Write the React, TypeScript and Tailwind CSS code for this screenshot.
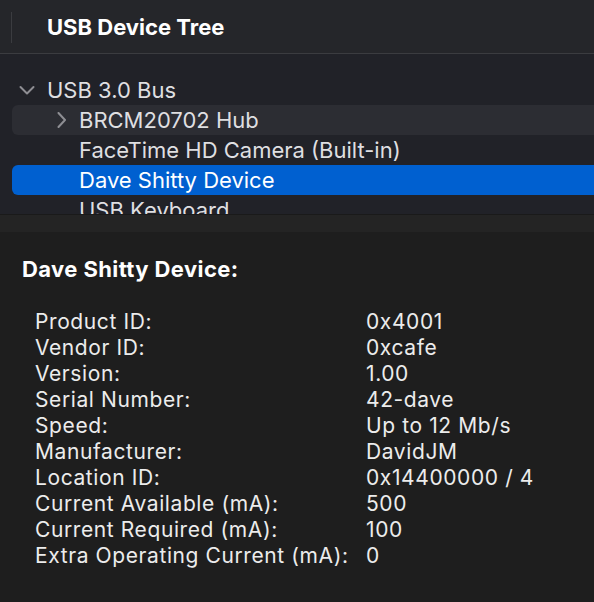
const details: [string, string][] = [
  ["Product ID:", "0x4001"],
  ["Vendor ID:", "0xcafe"],
  ["Version:", "1.00"],
  ["Serial Number:", "42-dave"],
  ["Speed:", "Up to 12 Mb/s"],
  ["Manufacturer:", "DavidJM"],
  ["Location ID:", "0x14400000 / 4"],
  ["Current Available (mA):", "500"],
  ["Current Required (mA):", "100"],
  ["Extra Operating Current (mA):", "0"],
];

function Chevron({ down }: { down?: boolean }) {
  return (
    <svg width="16" height="16" viewBox="0 0 16 16" className="shrink-0">
      <polyline
        points={down ? "1.5,5 8,11.5 14.5,5" : "4.5,1 11,8 4.5,15"}
        fill="none"
        stroke="#8e8e93"
        strokeWidth="2"
        strokeLinecap="round"
        strokeLinejoin="round"
      />
    </svg>
  );
}

export default function App() {
  return (
    <div
      className="w-[594px] h-[602px] overflow-hidden bg-[#1e1e1e] flex flex-col"
      style={{ fontFamily: "Inter, 'Noto Sans', sans-serif" }}
    >
      {/* header */}
      <div className="h-[54px] shrink-0 bg-[#25262a] flex items-start border-b border-[#3b3c40]">
        <div className="w-px h-[31px] mt-[12px] ml-[11px] bg-[#3b3c40]" />
        <div className="ml-[35px] mt-[14px] text-[22px] leading-[26px] font-bold text-white">
          USB Device Tree
        </div>
      </div>

      {/* tree */}
      <div className="h-[160px] shrink-0 bg-[#212228] overflow-hidden pt-[21px] text-[22px] text-[#dfdfe1]">
        <div className="h-[30px] flex items-center">
          <div className="ml-[19px]">
            <Chevron down />
          </div>
          <span className="ml-[12px]">USB 3.0 Bus</span>
        </div>
        <div className="h-[30px] flex items-center ml-[12px] rounded-l-[6px] bg-[#2c2d33]">
          <div className="ml-[42px]">
            <Chevron />
          </div>
          <span className="ml-[9px]">BRCM20702 Hub</span>
        </div>
        <div className="h-[30px] flex items-center">
          <span className="ml-[79px]">FaceTime HD Camera (Built-in)</span>
        </div>
        <div className="h-[30px] flex items-center ml-[12px] rounded-l-[6px] bg-[#0060d0] text-white">
          <span className="ml-[67px]">Dave Shitty Device</span>
        </div>
        <div className="h-[30px] flex items-center">
          <span className="ml-[79px]">USB Keyboard</span>
        </div>
      </div>

      {/* divider band */}
      <div className="h-[18px] shrink-0 bg-[#242424] border-t border-[#1a1a1a]" />

      {/* details */}
      <div className="flex-1 text-[#ececec] pl-[22px] pt-[24px]">
        <div className="text-[22px] leading-[26px] font-bold tracking-[0.4px] text-white">
          Dave Shitty Device:
        </div>
        <div className="mt-[27px] pl-[13px] text-[21px] tracking-[0.6px]">
          {details.map(([k, v]) => (
            <div key={k} className="h-[26px] flex items-center">
              <span className="w-[331px] shrink-0">{k}</span>
              <span>{v}</span>
            </div>
          ))}
        </div>
      </div>
    </div>
  );
}
